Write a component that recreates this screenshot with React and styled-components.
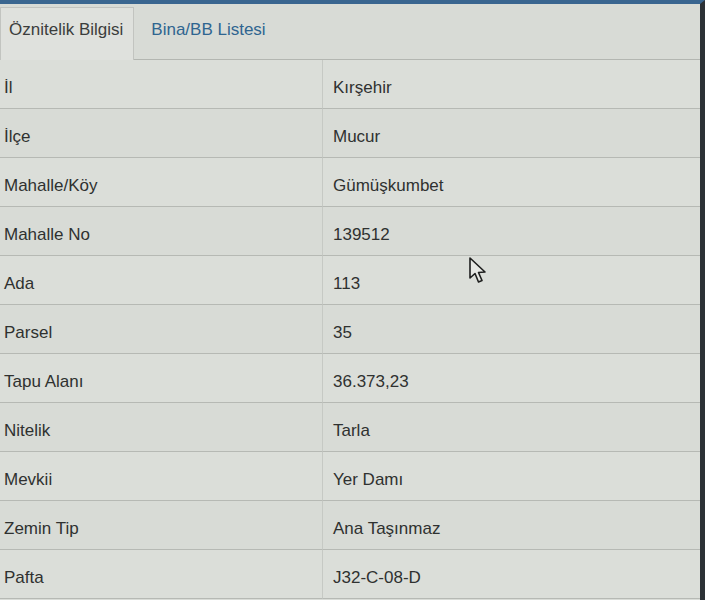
import { Fragment } from 'react';
import styled, { createGlobalStyle } from 'styled-components';

const GlobalStyle = createGlobalStyle`
  html, body {
    margin: 0;
    padding: 0;
    background: #d6d9d4;
  }
  body {
    font-family: "Liberation Sans", Arial, sans-serif;
  }
`;

const Screen = styled.div`
  position: relative;
  width: 705px;
  height: 600px;
  overflow: hidden;
  background: #d9dcd7;
  border-top: 4px solid #3a6690;
  box-sizing: border-box;
  border-right: 5px solid #2c3136;
`;

const TabBar = styled.div`
  display: flex;
  align-items: flex-end;
  height: 55px;
  background: #d8dbd6;
  border-bottom: 1px solid #b3b6b1;
`;

const Tab = styled.div`
  height: ${p => (p.$active ? '53px' : '50px')};
  box-sizing: border-box;
  display: flex;
  align-items: center;
  padding: 0 ${p => (p.$active ? '10px' : '16px')} 8px ${p => (p.$active ? '8px' : '17px')};
  font-size: 17px;
  color: ${p => (p.$active ? '#3b3d3c' : '#2f6590')};
  background: ${p => (p.$active ? '#dfe1dd' : 'transparent')};
  border: ${p => (p.$active ? '1px solid #c2c4c0' : 'none')};
  border-bottom: none;
  margin-bottom: ${p => (p.$active ? '-1px' : '0')};
`;

const Table = styled.div`
  display: grid;
  grid-template-columns: 322px 1fr;
`;

const Cell = styled.div`
  height: 49px;
  box-sizing: border-box;
  display: flex;
  align-items: center;
  padding: 7px 0 0 ${p => (p.$value ? '10px' : '4px')};
  font-size: 17px;
  color: #2f3130;
  border-bottom: 1px solid #b6b9b4;
  border-left: ${p => (p.$value ? '1px solid #c6c9c4' : 'none')};
  background: ${p => (p.$odd ? '#d8dbd6' : '#dbded9')};
`;

const Cursor = styled.svg`
  position: absolute;
  left: 468px;
  top: 252px;
`;

const rows = [
  ['İl', 'Kırşehir'],
  ['İlçe', 'Mucur'],
  ['Mahalle/Köy', 'Gümüşkumbet'],
  ['Mahalle No', '139512'],
  ['Ada', '113'],
  ['Parsel', '35'],
  ['Tapu Alanı', '36.373,23'],
  ['Nitelik', 'Tarla'],
  ['Mevkii', 'Yer Damı'],
  ['Zemin Tip', 'Ana Taşınmaz'],
  ['Pafta', 'J32-C-08-D'],
];

export default function App() {
  return (
    <>
      <GlobalStyle />
      <Screen>
        <TabBar>
          <Tab $active>Öznitelik Bilgisi</Tab>
          <Tab>Bina/BB Listesi</Tab>
        </TabBar>
        <Table>
          {rows.map(([label, value], i) => (
            <Fragment key={label}>
              <Cell $odd={i % 2 === 1}>{label}</Cell>
              <Cell $value $odd={i % 2 === 1}>{value}</Cell>
            </Fragment>
          ))}
        </Table>
        <Cursor width="22" height="30" viewBox="0 0 22 30">
          <path
            d="M2 2 L2 22 L7 17.5 L10.5 26 L14 24.5 L10.5 16.5 L17 16 Z"
            fill="#e6e8e4"
            stroke="#1e1f1e"
            strokeWidth="1.6"
            strokeLinejoin="round"
          />
        </Cursor>
      </Screen>
    </>
  );
}
